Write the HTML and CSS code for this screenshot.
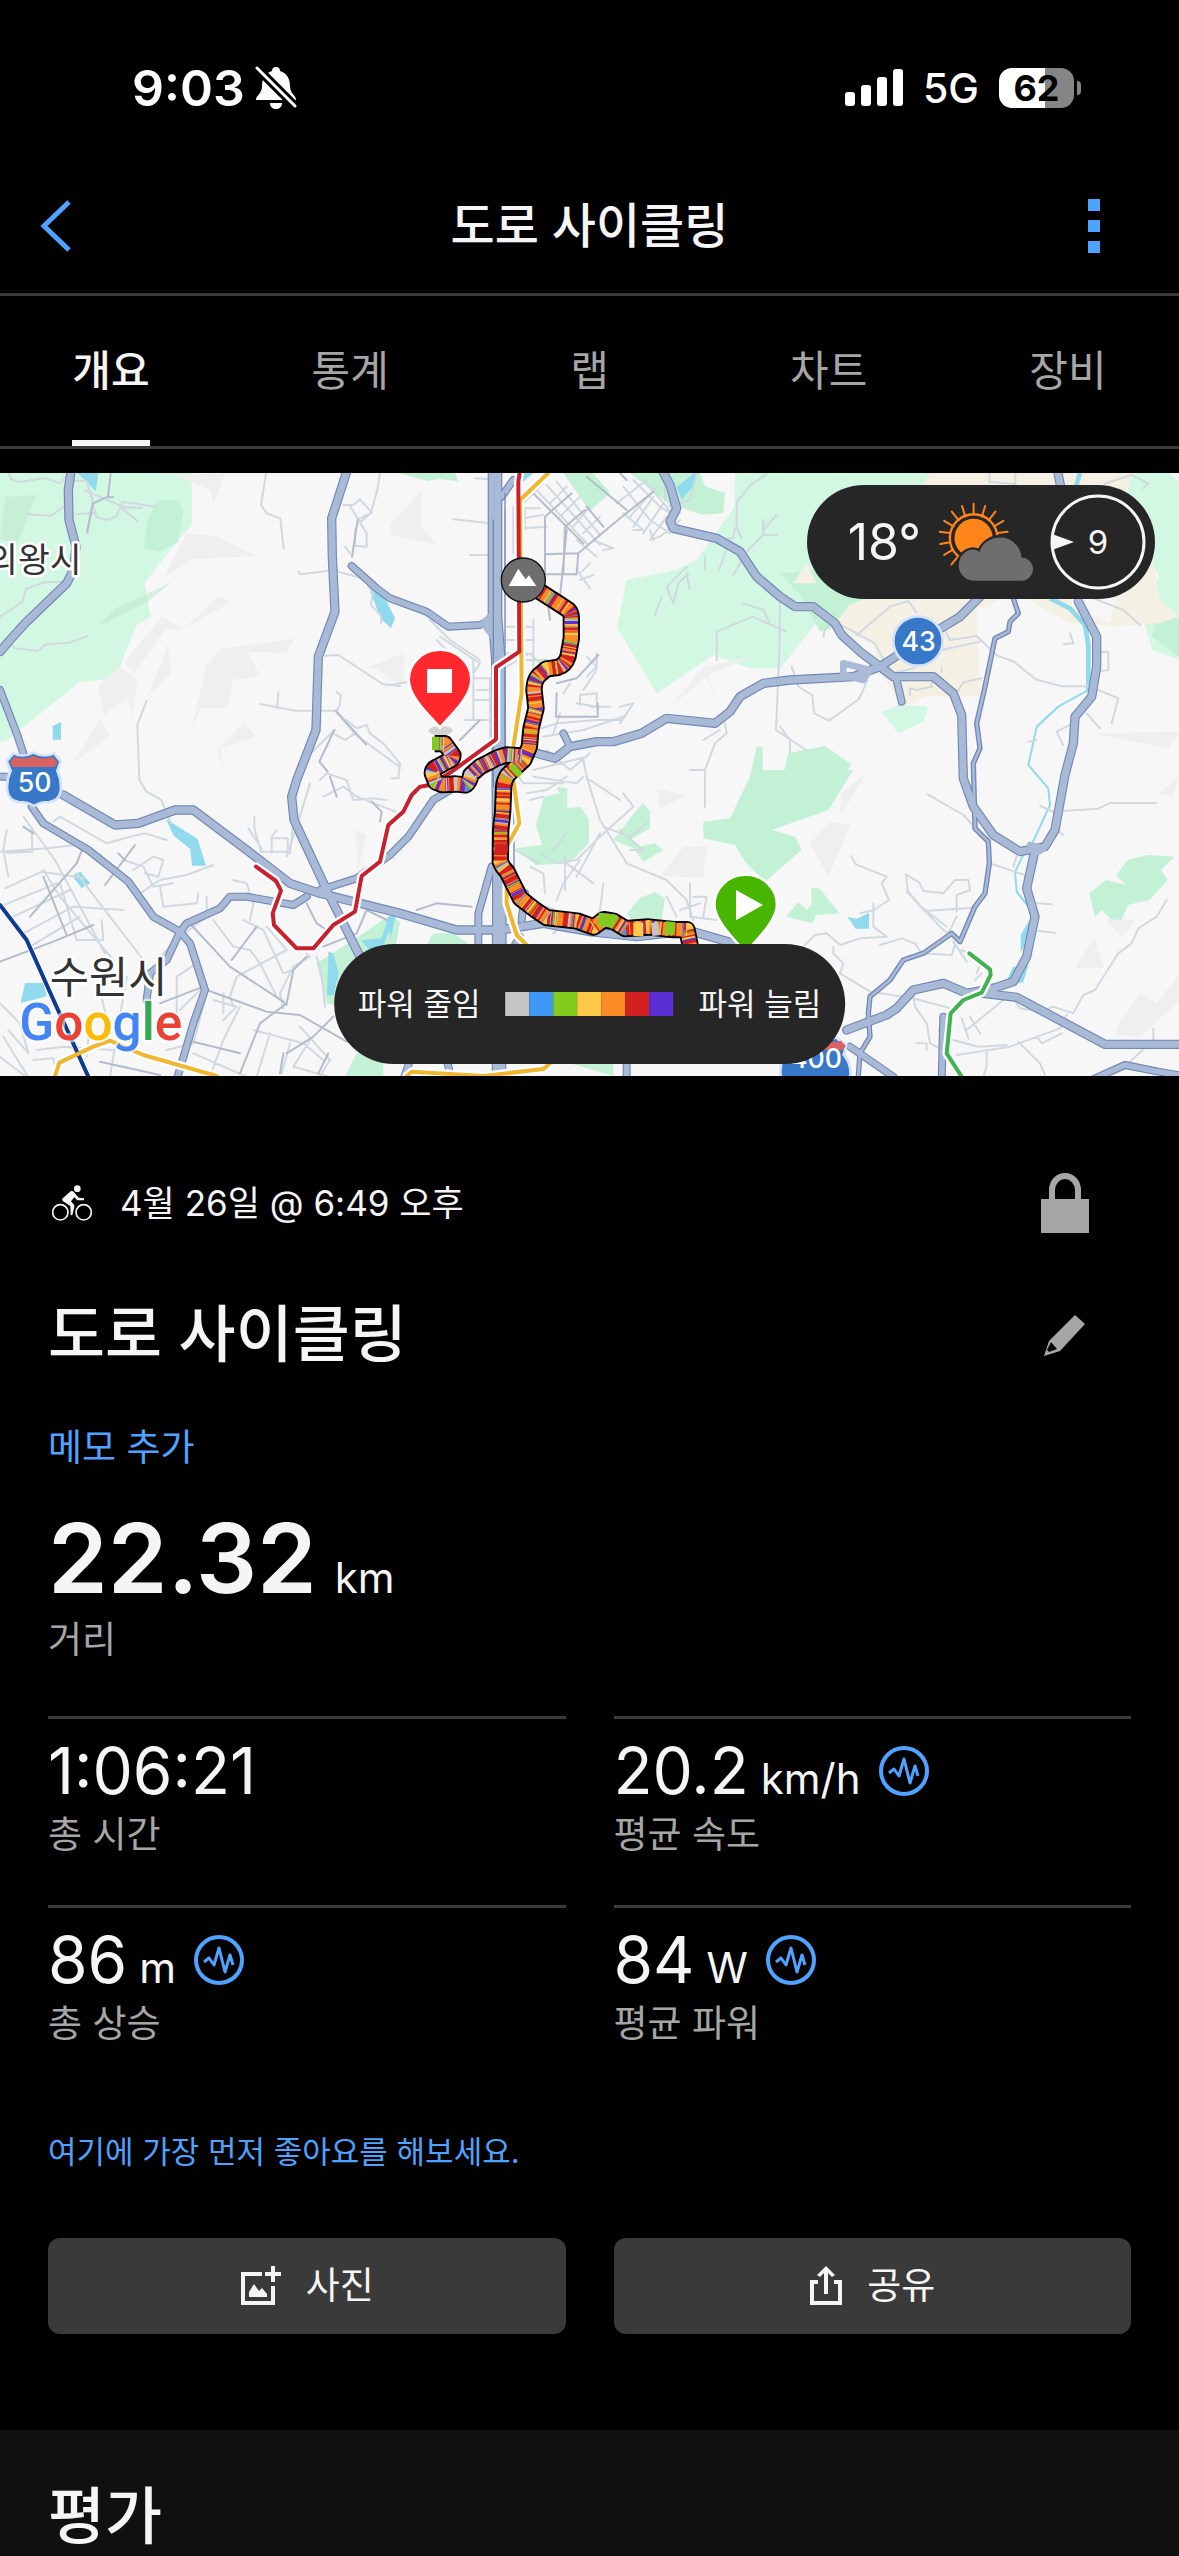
FILE: index.html
```html
<!DOCTYPE html>
<html lang="ko">

<head>
    <meta charset="UTF-8">
    <meta name="viewport" content="width=device-width, initial-scale=1.0">
    <title>도로 사이클링</title>
    <link rel="stylesheet" href="styles.css">
</head>

<body>
    <div class="status-bar">
        <div class="status-group">
            <span class="clock">9:03</span>
            <svg class="bell" viewBox="0 0 42 44" width="42" height="44">
                <path fill="#fff" d="M21 1c3 0 4 2 4 4 7 2 10 8 10 15 0 8 6 9 6 14H1c0-5 6-6 6-14C7 13 10 7 17 5c0-2 1-4 4-4zM15 37h12c0 4-3 6-6 6s-6-2-6-6z" />
                <path stroke="#000" stroke-width="9" d="M0 0L42 42" />
                <path stroke="#fff" stroke-width="3" stroke-linecap="round" d="M2 2L40 40" />
            </svg>
        </div>
        <div class="status-group status-right">
            <svg viewBox="0 0 58 38" width="58" height="38" fill="#fff">
                <rect x="0" y="23" width="10" height="14" rx="3" />
                <rect x="16" y="16" width="10" height="21" rx="3" />
                <rect x="32" y="8" width="10" height="29" rx="3" />
                <rect x="48" y="0" width="10" height="37" rx="3" />
            </svg>
            <span class="network">5G</span>
            <div class="battery"><span>62</span></div>
        </div>
    </div>

    <header class="nav">
        <button class="nav-button" aria-label="뒤로">
            <svg viewBox="0 0 32 52" width="32" height="52" fill="none" stroke="#4da3ff" stroke-width="5">
                <path d="M29 2L4 26l25 24" />
            </svg>
        </button>
        <h1>도로 사이클링</h1>
        <button class="nav-button nav-more" aria-label="더 보기">
            <svg viewBox="0 0 12 54" width="12" height="54" fill="#4da3ff">
                <path d="M0 0h12v12H0zM0 21h12v12H0zM0 42h12v12H0z" />
            </svg>
        </button>
    </header>

    <nav class="tabs">
        <button class="tab active">개요</button>
        <button class="tab">통계</button>
        <button class="tab">랩</button>
        <button class="tab">차트</button>
        <button class="tab">장비</button>
    </nav>

    <div class="map">
        <svg class="map-canvas" viewBox="0 39 3537 1809">
            <rect y="39" width="3537" height="1809" fill="#f7f7f7" />

            <!-- parks and hills -->
            <g fill="#d2f7e2">
                <path d="M0 39H575V195L530 245 433 370l20 100-43 25-65 160-105 10L15 845 0 845z" />
                <path d="M2205 39h590l15 36-200 340-150 60-120 150H2250l-110-40-170 115-118-195 27-145 150-30 60-30 115-160z" />
                <path d="M3390 39h120l27 30v530l-80-30-30-100 50-120-100-180zM2645 755l50-20 90 5-15 45-75 35z" />
            </g>
            <g fill="#c3f1d6">
                <path d="M470 120h65l15 35-15 90-60 30-43-10 10-80zM1690 39h90l50 60-60 55zM1890 39h210l15 40 60 20-5 60-60 5-100-30zM1195 39h170l10 25-60-8-30 7z" />
                <path d="M2340 340l120-10 145 95-5 50-140 40-60-110zM3480 455l57 15v120l-80-60zM2365 880l110-22 80 55-50 60-100 40-65-30zM2270 860h18v85l25 15-10 50-65-10z" />
                <path d="M1632 1010l45-10-5-20 30 5v60l40-5 25 40v70l-60 60-100 5-60-50 80-10-20-60zM1910 1050l20-20 20 25v50l-60 35 25 20 50-10 25 20-60 35-30-40-60-25z" />
                <path d="M2260 930h300l-75 120-170 60 70 20 20 40-110 95-60-60-30-50-95-20v-50l80-10zM1880 1360l40-45 45-20 30 20-10 65-80 10zM1300 1420l60 0 50 35H1280z" />
                <path d="M2358 1370l37-45 25 25 15-15-2-50h25l60 75-70 5-10 25zM3268 1300l50-40 60 15-30-30 35-45 60-15 80 5-40 40 20 30-55 60-65 15-18 45h-30l-30-30-20 20z" />
                <path d="M950 1510l110-70 110-75 30 20-10 60-110 210-100-25zM1070 1780h80v70H1035zM1710 1810h130v38z" />
            </g>
            <g fill="#f5f0e4">
                <path d="M2790 39h610l-30 70-160 330 140 60-140-10-160-90-120 50 10 260-155 0-80 30-60-100-30-90-120-45 55-70 80-30-10-80z" />
                <path d="M3350 400l60-180 40 20 30 180 57 50-60 20-150 10zM2380 370l40-60 30 60z" />
            </g>
            <g fill="#efefef">
                <path d="M520 45l155-5-35 95-10-45zM560 220l95 10 110 58-190 10-85 55zM555 505l100-98 35 20zM485 470l70 38-60 0-90 130-33-30zM665 565l217-28-25 43-115-6 38 75-80 10-20 85-75 0-30 60 45-190zM505 550l8 90-70 70zM360 620l55 40-20 115-10-60-75 50-15-90zM300 778l30 50-110 80zM730 790l40 40-110 35 10 60-18-55z" />
                <path d="M1268 90l-5 110 50 55-140-30-3-35zM1110 620l100-40v90zM1218 580l-20 90-28-10zM2255 590l-130 55 30 100-35-95-110 90 100-120zM1970 985l90 22-80 35zM2050 1160l70-2-10 95-130-5z" />
                <path d="M2598 940l-75 60 0 65zM2492 1085l58 10-65 155-55-100zM3280 820l260-5-35 50zM3315 1377l90 5-40 50zM3282 1432l30 90-85 2zM3350 1700l70-100 50 30 70-90v80l-120 110-75-5zM1065 1105l35 20-25 105zM3475 1000l62-50-20 60z" />
            </g>
            <path fill="#bfe9cf" opacity=".6" d="M15 110l95-5-60 150-50-20zM290 500l60-55 165-78-75 60z" />
            <g fill="#90daee">
                <path d="M233 39h62l-8 55zM1105 380l40 15 40 80-12 28-30-25zM158 798l25-12v53h-25zM1158 440l27 30-15 35zM2030 80l60-45-5 35-40 50zM1570 39h30l-32 28z" />
                <path d="M498 1077l95 60 25 80-42 0-5-50-50-40zM216 1247l25-12 30 35-26 14zM75 1569l55 0 10 40-78 20zM985 1475l15 5 16 60-15 65-20 2zM1085 1440l60-5 20-65 25-5-45 100-35 10zM2542 1371l30 5 35-18v48h-40zM1170 1370l15 10-15 60z" />
                <path d="M3040 1520l45-4-15 50-60 15zM3090 1376l-8 70-20 30 0-50z" />
            </g>
            <g fill="none" stroke="#90daee">
                <path stroke-width="14" d="M3240 39l-15 50M3150 415l60 30 45 50 10 60v140" />
                <path stroke-width="6" d="M3265 690l-90 50-65 60-25 115 60 70 5 50-60 130M3070 1185l-25 50 5 60 35 45M2980 1570l-85 45-50 40-30 60" />
            </g>

            <!-- minor streets -->
            <g fill="none" stroke="#d1d9e0" stroke-width="6" stroke-linejoin="round" stroke-linecap="round">
                <path d="M25 40l10 18 25 8 75-12 45 16 20-20M85 163l68 4 40-28M225 62h35l18 60-15 100M280 130l8 40 32 10 28-10 20-45 100 15M360 140l52 43M228 163l60-5M0 470l65-42 15-42 55-20h55M30 550l15 15 68 8 25-20 70-5 55-20M440 722l-28 72 6 165 20 35 45 25 30 70M798 40l-15 95 18 25 40 15 10 90M895 335l8 8 95-12 95 25 25 45-5 35 30 30v25M975 587l40-2 135 88 50 5M780 732l108 20h115M835 697l-4 50M1010 695l12 10-2 30-12 20 60 70 130 95M1003 810l-100 100M1040 780l30 25 30-10 10 25 40 30 50 60-5 45h-20M1000 820l35 20 30-20M1030 135h30l20-17 35 40-40 20-25-40M1140 40l-8 50-20 70-30 25M1075 180l25 40v40l-35-3V210M1035 260l15 20" />
                <path d="M255 92l120 50 50 2M160 1085l20-15 140 80 70-20 45-10 65 20M70 1070l95 130 150 280M0 1175l140-10 90-10M20 1110l-10 60 15 80M95 1110l2 65-75 3M15 1285l110-50 130 20M0 1340l170-70M40 1370l170-80M70 1420l150-80 150 10M90 1460l150-90M130 1230l50 80 160 190M180 1270l50 170h80l-5-60M230 1240l200 260M370 1200l60 20 30 60 60-10M400 1230l60-40 30 10-15 50-40-10M420 1300l60-40 80-15 80-30M480 1280l10 60 100-10M590 1330l5-30M620 1310v60l-80 60-60 60M640 1380l60 80 50 10 30 40 50 100M700 1260l40 10 20 60-10 50M730 1380l60 30 60 130 30-10M800 1400l60 70-150 80-20 60 10 30" />
                <path d="M763 1070v35l20 70h80l0-40-50 0M815 1180v-50l15-20M745 1105l40 60M870 1180l10-90M930 970l-40 130-30 90M960 960l20-20 60 20 20 60 60-5 40 5M970 1010l60-30 40 30 130 50M820 1380l50 50 60 60-50 30-40 80 10 45M950 1490l15 60 10 90" />
                <path d="M0 1630l60 60 25 90-60-70M0 1790l90 70-80-130M100 1800l60-5 10 50M110 1770l80-10 150 10M270 1680l-10 110M300 1590l30 130M380 1550l-50 300M530 1660v-110l60-40M530 1680l0-130M600 1590l-60 60M640 1620l70 20-40 40M670 1600l0 60M580 1780l250 110M620 1600l-40 150-80 20M720 1640l-50 100-40 110M760 1710l150 40 60 50M810 1720l-40 130M870 1750l-25 90M900 1700l90 100-30 48M930 1740l-50 80 100 28" />
                <path d="M1360 178l100 10M1410 285h60M1425 55l50 3M1290 480l60 60 90 60M1320 530l120 80-20 30M1310 540l60 60M1170 675l60-10 60-55M1395 655h80M1420 600v180M1470 660v180M1395 780h80M1420 720h50M1430 690h50" />
                <path d="M1540 140v140M1560 145h60M1570 175l60-10M1570 205l70-5M1575 150v60M1515 150v180M1550 310v60M1570 130l60-60M1610 90l150 160M1640 75l160 180M1670 65l40 50 90 110M1650 130l50-50M1680 170l60-60M1720 200l50-60M1750 220l50-50M1730 240l60 50M1780 240l60 25-30 5" />
                <path d="M1870 80l80 100 60 40M1900 60l80 80 50 30M1930 60l70 80 30 50M1870 160l60 50-30 0M1960 110l-60 90M1990 130l-60 90M2000 170l-50 70M1850 130l90-70M1890 170l80-90M1960 240l-10-30M2040 180l-60 50-30 10M1995 120v-40h15v60l60-20 20-80M2010 140l30 20" />
                <path d="M1570 480v150M1600 480v150M1520 500h80M1520 540h80M1570 600h70M1520 580h60M1740 340l30-30M1730 330l40 55M1740 360l40-15M1520 620l70-40 50 50M1690 700l20-30M1760 590l30 30-30 30M1790 580v50l-40 60" />
                <path d="M1610 810l60-20 120-10h70M1630 830l120-20 120-40M1640 870l70 60 60-50M1680 760l-20 60M1860 740l40-10-40 60M1730 730l60 10v-40l-50 5v30M1830 740h-60M1600 930l160-40M1530 910l40 60h120M1600 950l130 20 20-20M1580 1000l60-10 60-40M1590 1020l40-10" />
                <path d="M1750 900l10 50 40 130 80 130 120 50 60 60 20 60M1770 960l90 60M1620 1180l50 30 60-10 70-70 100-90-30-40M1545 1170l70 40M1700 1210l80 60M1740 1200l-50 70-20 50M1695 1190l0 100M1800 1120l-70 130M1700 1120l-40 50M1810 1270l-10 80-20 30M1590 1220l40 20 5 60M1810 1100l80 30 50-40M1860 1110l70 60h-40" />
                <path d="M2070 1270v100l80 10M2040 1350l60-20M2080 1310l40 0-10 60M2000 1310l30 60M1640 1340l50 20-10 40M1660 1420l80-60M2110 840l50-30M2110 930h5v110M2070 930h45l30-80 35-30-5-30M2340 400l-2 180-10 230 90 60M2150 600v-80M2060 320l-60 60 20 50 15-60 30-30M1985 410l-20 55M2115 290v40M2060 340l8 45" />
                <path d="M2300 42l-50 35-40 50v75l15 32M2205 205l-5 30-15 0v20l-28 75M2330 225l-40 0-50 50-40 70M2330 165l-40 45M2290 180v40M2230 430l60 20 20 40M2148 515l110-45 100 45" />
            </g>
            <g transform="translate(2340 0)" fill="none" stroke="#d1d9e0" stroke-width="6" stroke-linejoin="round" stroke-linecap="round">
                <path d="M628 40v25l78 7V40M975 70l80-25 50 25-15 15M230 525l100-85 55-17 25 35M130 530l5-25 30-20 120 65 20 40 35 50 60-15 60-50 140-30M490 500l20 40 80-12 60 58 50 18 70 55 75 20h80M605 655l-55 12-20 32M455 665v15l-45 10-20-5v20M0 800l30 40v40M35 620l20 60 42 25 5 55 45 22 90-65 25-55M940 415l90 35 50 45M870 520l10 30-30 3M485 625v10M955 575h30v55l-35 5M955 690l60 25-20 75M920 760l40 45M830 815l60-30M830 815l20 40M745 845l25-5" />
                <path transform="translate(0 930)" d="M443 73l108 62 60 70M845 123l110-7 35-17h138M780 107l50 25M830 180l20 15M213 258l15 25 92 37-15 20 22 50-45 30-40 10M378 313l40 25 12 25 60 7 35-40h40l5 30-40 15v50M378 313l5 50 50 60 80-5 70-5M380 365l110 115 50 30M430 415l70 55M75 525l30-30 35-5 40 35 60-20 80-5-40-30v-70M300 525l65-20 40 15 20 30 90 5 10-30M160 530v20l30 30-10 30 90 55 130 20 110 30M630 280l110 37M700 290l10-30M770 400l45 3M775 483l50 5M700 685l20 30 60 10 40-15 60 20 30-55 35-15 70-110 40-30 20-45 55-35 30-50M860 735l-20 40-150 55-160 25M520 810l75 20 85-5M560 780l110-90M545 745l20 60M570 740l30 50M400 680l5 30 35 50 10 60 40 20M410 820h30v20M715 815l65 65 15 35M620 840v50l-10 30M1120 775v35l-75 70M770 800l15 20 60-30M590 610l15-40-60-30M585 630l20-20M530 440l-30 60M560 575l-40-60" />
            </g>
            <g fill="none" stroke="#b4bccb" stroke-width="6" stroke-linejoin="round" stroke-linecap="round">
                <path d="M332 42l-8 68-45 20-18 85M325 112h15M1073 180l-17 110M1008 753l90 100M1003 810l-45 95 25 30" />
                <path d="M100 1120l-30-20M250 1160l-20 50-140 160M405 1155l-90 120M355 1180l20 20M130 1250l70 175M0 1505l160-60 120-50M560 1380l130 140 160 105 10 10M770 1400l-75 100M920 1490l-40 40-20 100-80 60-60 150M620 1590l180 65 100 10 140 80M480 1630l130-50M580 1745l140 35M300 1805l180 40M985 1780l-30 60M860 1780l80-50 60-60M840 1840l10-60M920 1330l30 60 30 20M970 1460l100-40 30-70 60 30M990 950l20 60M1115 1025l30 30-5 30" />
                <path d="M1635 290v-120l80-70M1635 283l100-3 125-105 100-80M1735 280l-5 60M1635 283v60h95M1690 340l5-140 60-50M1600 100l150 150M1760 140l50 60M1760 50l120 100M1860 40l20 20M1640 400l10 80M1670 670l60-15 65-70M1670 700l-2 70h125v-40M1700 210l-20 200M1380 840l60-60M1250 1350l60-20 105 10" />
            </g>

            <!-- highways: dark casing first, then the lighter fill -->
            <defs>
                <g id="roads-wide">
                    <path d="M215 20l-10 70 2 90 21 80-8 70-20 40L75 490 30 540 0 575" />
                    <path d="M190 1005l155 90 70-5 110-40h55l160 120 130 100 90 30 240 60 170 50h130l130-20 140 25 140 15 160-18 130 38" />
                    <path d="M1045 20L995 175l2 115 8 165-50 135-7 220-58 150-15 50 7 70 98 210 100 200" />
                    <path d="M3225 20M3170 20l20 100M3235 425l55 105 0 90-15 90-50 60-5 80-25 95-30 165-30 50-75 15-80-50-60-85-30-85-5-190-25-65-60-50H2680l-100-75-55-50-20-35-65-50h-55l-45-30-70-60-50-75-70-40-130-30-10-20 20-40-20-70-40-75-40-15-80-71-20-20" />
                    <path d="M1610 880l55 15 45-35 80-15h50l85-25 75-45 145 15 45-35 30-45 70-40 80-10 190-10 80-30 140-90 100-60 60-60" />
                    <path d="M3105 1170l-25 115 25 85-25 120-40 75-60 20-80 15-70-30-90 20-50 55-30 20-120 45M2950 1600l100 12 265 141h230" />
                </g>
                <g id="roads-mid">
                    <path d="M0 690l50 130 20 60M0 950h60M95 1040l35 50 135 80 120 95 75 105 80 45 30 35 45 140-35 100-50 170" />
                    <path d="M540 1415l-40 85-50 40-10 80M540 1415l20-25 100-45 30-35h50l140 25 40-25M960 1290l110-35 100-70 55-55 75-110 50-30" />
                    <path d="M1055 318l75 67 40 30 110 40 65 45 95-5 40-20M1540 60l-35 50M1475 1220l-40 140v90M2690 660l15 65M1690 820l20 40" />
                    <path d="M2830 1670l-5 190M2550 1760l130 90M3285 1855l90-40 100 20 70 12M1230 1800l-20 60M1340 1800l15 60M1880 1800l0 60M1575 1300l-10 80M1560 1430l-30 50" />
                </g>
                <g id="roads-thin">
                    <path d="M3040 415l15 45-25 25-5 30-40 20-30 145-25 110 10 75-20 45 5 195 40 40 3 65-13 90-30 40-45 105-25-25-85 60-60 20-40 60-60 50-5 50 5 70-30 50-5 68" />
                </g>
                <path id="expressway" d="M1485 20v450l10 130 3 700-1 560" />
            </defs>
            <g class="casing">
                <use href="#roads-wide" stroke-width="28" />
                <use href="#roads-mid" stroke-width="24" />
                <use href="#roads-thin" stroke-width="16" />
                <use href="#expressway" stroke-width="44" />
            </g>
            <g class="fill">
                <use href="#roads-wide" stroke-width="21" />
                <use href="#roads-mid" stroke-width="17" />
                <use href="#roads-thin" stroke-width="8" />
                <use href="#expressway" stroke-width="37" />
                <path stroke-width="20" d="M2530 610l80 20-20 30-60-15zM3090 1155l40 10-15 10M1450 490l20-20 10 60z" />
            </g>
            <path class="casing" stroke-width="4" d="M1480 180v800M1515 100v1000M1542 800v460" />

            <!-- rail lines -->
            <defs>
                <path id="rail-yellow" d="M1645 39l-85 81 5 580-25 160 0 100 18 130-38 70v170l30 95 30 30M1220 1848l15-13 215 13 180-21 20-17M165 1848l13-40 102-48 50-18 100 43 220 63" />
                <path id="rail-red" d="M1560 30L1555 65 1558 575 1488 622V838L1355 935 1290 975 1260 980 1235 1005 1210 1055 1165 1095 1140 1205 1085 1248 1065 1355 1000 1395 940 1465H890L822 1395 818 1360 843 1292 828 1263 768 1220" />
                <path id="rail-green" d="M2908 1480l62 48 2 17-27 53-55 22-38 40-12 120 45 70" />
                <path id="rail-navy" d="M0 1335l80 105 85 190 100 220" />
            </defs>
            <g fill="none" stroke-linejoin="round" stroke-linecap="round">
                <g stroke="#fff" stroke-width="26">
                    <use href="#rail-yellow" />
                    <use href="#rail-red" />
                    <use href="#rail-green" />
                    <use href="#rail-navy" stroke-width="16" />
                </g>
                <g stroke-width="12">
                    <use href="#rail-navy" stroke="#0d3b92" />
                    <use href="#rail-yellow" stroke="#f0b62f" />
                    <use href="#rail-red" stroke="#c9202f" />
                    <use href="#rail-green" stroke="#3fb34f" />
                </g>
            </g>

            <!-- place names and road shields -->
            <g class="place">
                <text x="245" y="336" font-size="104" text-anchor="end">의왕시</text>
                <text x="326" y="1600" font-size="128" text-anchor="middle">수원시</text>
            </g>
            <g id="shield-50">
                <path class="shield" d="M40 880q30 14 60-2 32 16 62 2l20 24-10 28q14 30 10 62-5 28-34 32-30 0-46 12-16-12-46-12-29-4-34-32-4-32 10-62l-12-28z" />
                <path fill="#d96262" d="M44 890q28 10 57-2 29 12 57 2l14 16-8 15H38l-8-15z" />
                <text class="shield-text" x="104" y="997">50</text>
            </g>
            <g transform="translate(2345 852)">
                <path class="shield" d="M40 880q30 14 60-2 32 16 62 2l32 24-8 28q24 30 20 62-5 28-34 32H40Q0 1020-3 994q-4-32 10-62l-2-28z" />
                <path fill="#d96262" d="M44 890q28 10 57-2 29 12 77 2l14 16-8 12H28l-8-15z" />
                <text class="shield-text" x="103" y="972">400</text>
            </g>
            <circle class="shield" cx="2754" cy="543" r="74" />
            <text class="shield-text" x="2756" y="573">43</text>

            <text class="google" x="58" y="1741"><tspan fill="#4285f4">G</tspan><tspan fill="#ea4335">o</tspan><tspan fill="#fbbc05">o</tspan><tspan fill="#4285f4">g</tspan><tspan fill="#34a853">l</tspan><tspan fill="#ea4335">e</tspan></text>

            <!-- recorded track, coloured by power -->
            <defs>
                <path id="track" d="M1620 395l55 35 30 20q10 10 9 30v55l-10 55q-8 25-30 32l-35 5-25 22q-12 15-12 41l6 55-15 60-5 55-17 40-48 45q-10 15-12 35l-3 75-6 55-1 95q5 15 20 30l20 40 20 40 45 35 35 23 90 10 50 18 30-22 30 5 35 22 70-5 75 8 40 0 10 50" />
                <path id="track-spur" d="M1565 888l-45-3q-25 5-50 20l-30 15-28 25q-2 20-15 30l-30-3-40 2-20-8-10-26q0-15 20-22l30-16q12-5 12-16l-25-35-30 0" />
            </defs>
            <g class="track">
                <g stroke="#000" stroke-width="52">
                    <use href="#track" />
                    <use href="#track-spur" />
                </g>
                <g stroke-width="40">
                    <g stroke="#d32020">
                        <use href="#track" />
                        <use href="#track-spur" />
                    </g>
                    <g stroke="#fa8b25" stroke-dasharray="7 5 16 9 4 12 23 18 9 7 3 14">
                        <use href="#track" />
                        <use href="#track-spur" />
                    </g>
                    <g stroke="#fcc949" stroke-dasharray="4 21 9 34 3 17 6 52">
                        <use href="#track" />
                        <use href="#track-spur" />
                    </g>
                    <g stroke="#5b2fd6" stroke-dasharray="3 38 5 61 4 25 9 83">
                        <use href="#track" />
                        <use href="#track-spur" stroke-dasharray="8 12 4 23 6 17" />
                    </g>
                    <g stroke="#3f97f6" stroke-dasharray="2 47 3 89 2 31" stroke-dashoffset="20">
                        <use href="#track" />
                        <use href="#track-spur" />
                    </g>
                    <g stroke="#c4c4c4" stroke-dasharray="3 74 2 51 6 140">
                        <use href="#track" />
                        <use href="#track-spur" stroke-dasharray="4 30 9 22" />
                    </g>
                    <g stroke="#82ca1e" stroke-dasharray="2 66 4 93" stroke-dashoffset="35">
                        <use href="#track" />
                        <use href="#track-spur" />
                    </g>
                    <path stroke="#82ca1e" d="M1555 925l-15 14M1795 1378l40 4 12 8M1995 1404l30 2M1318 850l-22 0" />
                    <path stroke="#c4c4c4" d="M1955 1408l22-2" />
                    <path stroke="#fcc949" d="M1900 1408l30 0" />
                    <path stroke="#d32020" d="M1503 1150v30" />
                </g>
            </g>

            <circle cx="1570" cy="360" r="66" fill="#6e6e6e" stroke="#111" stroke-width="4" />
            <path fill="#fff" d="M1526 378l29-52 22 32 10-12 22 32z" />
            <ellipse cx="1322" cy="812" rx="36" ry="14" fill="#000" opacity=".15" />
            <path fill="#ff282c" stroke="#fff" stroke-width="8" d="M1320 803c-20-26-94-88-94-144a94 90 0 0 1 188 0c0 56-74 118-94 144z" />
            <path fill="#fff" d="M1281 627h75v72h-75z" />
            <path fill="#48b500" stroke="#fff" stroke-width="8" d="M2237 1478c-20-26-94-92-94-144a94 90 0 0 1 188 0c0 52-74 118-94 144z" />
            <path fill="#fff" d="M2208 1290l81 45-81 46z" />
        </svg>

        <div class="weather">
            <span class="temperature">18°</span>
            <svg class="weather-icon" viewBox="480 125 286 242" width="95" height="80">
                <g stroke="#ff851b" stroke-width="6">
                    <path d="M584 130v32M549 137l10 32M619 137l-10 32M518 154l20 26M650 154l-20 26M495 182l28 17M674 182l-28 17M481 215l31 4M687 215l-31 4M483 252l30-5M495 285l26-16M517 314l22-27" stroke-linecap="round" />
                    <circle cx="584" cy="234" r="72" fill="none" stroke-width="7" />
                </g>
                <circle cx="584" cy="234" r="58" fill="#ff851b" />
                <path fill="#6e6e6e" stroke="#262626" stroke-width="14" paint-order="stroke" d="M585 363a45 47 0 0 1-2-94q10 0 18 7a66 66 0 0 1 128 17 35 35 0 0 1-1 70z" />
            </svg>
            <div class="wind">
                <svg viewBox="0 0 96 96" width="96" height="96">
                    <circle cx="48" cy="48" r="46" fill="none" stroke="#f5f5f5" stroke-width="3" />
                    <path fill="#f5f5f5" d="M2 40l22 8-22 8z" />
                </svg>
                <span>9</span>
            </div>
        </div>

        <div class="legend">
            <span>파워 줄임</span>
            <div class="legend-scale">
                <i class="zone-0"></i><i class="zone-1"></i><i class="zone-2"></i><i class="zone-3"></i><i class="zone-4"></i><i class="zone-5"></i><i class="zone-6"></i>
            </div>
            <span>파워 늘림</span>
        </div>
    </div>

    <main class="summary">
        <div class="meta">
            <svg viewBox="54 68 144 114" width="48" height="38" fill="#f5f5f5">
                <g fill="none" stroke="#f5f5f5" stroke-width="5">
                    <circle cx="91" cy="153" r="23" />
                    <circle cx="161" cy="153" r="23" />
                </g>
                <circle cx="142" cy="82" r="10" />
                <path d="M122 90q5-2 9 1l15 18 16 2v6h-20l-9-9-10 12 9 10q2 3 1 7l-6 25h-5l-1-28-22-14q-5-4-1-9z" />
            </svg>
            <span class="date">4월 26일 @ 6:49 오후</span>
            <svg class="lock" viewBox="0 0 48 60" width="48" height="60">
                <path fill="#a6a6a6" d="M0 26h48v34H0z" />
                <path fill="none" stroke="#a6a6a6" stroke-width="6" d="M11 27V17a13 14 0 0 1 26 0v10" />
            </svg>
        </div>
        <div class="title-row">
            <h2>도로 사이클링</h2>
            <button class="edit" aria-label="제목 편집">
                <svg viewBox="0 0 42 42" width="42" height="42">
                    <path fill="#a6a6a6" d="M31 1l10 9-25 27L0 42 5 27z" />
                    <path fill="#000" d="M7 28l6 7-8 3-2-2z" />
                </svg>
            </button>
        </div>
        <a class="note-link" href="#">메모 추가</a>

        <div class="distance">22.32 <small>km</small></div>
        <div class="label">거리</div>

        <div class="stats">
            <div class="stat">
                <div class="value">1:06:21</div>
                <div class="label">총 시간</div>
            </div>
            <div class="stat">
                <div class="value">20.2 <small>km/h</small>
                    <svg class="pulse" viewBox="0 0 50 50" width="50" height="50"><use href="#pulse" /></svg>
                </div>
                <div class="label">평균 속도</div>
            </div>
            <div class="stat">
                <div class="value">86 <small>m</small>
                    <svg class="pulse" viewBox="0 0 50 50" width="50" height="50"><use href="#pulse" /></svg>
                </div>
                <div class="label">총 상승</div>
            </div>
            <div class="stat">
                <div class="value">84 <small>W</small>
                    <svg class="pulse" viewBox="0 0 50 50" width="50" height="50"><use href="#pulse" /></svg>
                </div>
                <div class="label">평균 파워</div>
            </div>
        </div>

        <a class="like-link" href="#">여기에 가장 먼저 좋아요를 해보세요.</a>

        <div class="actions">
            <button class="action">
                <svg viewBox="0 0 42 42" width="42" height="42" fill="#f5f5f5">
                    <path d="M1 7h21v4H5v25h26V21h4v19H1zM31 1h4v6h6v4h-6v6h-4v-6h-6V7h6zM9 32V27l5-8 5 7 3-3 5 6v3z" />
                </svg>
                사진
            </button>
            <button class="action">
                <svg viewBox="0 0 34 42" width="34" height="42" fill="#f5f5f5">
                    <path d="M1 15h8v4H5v17h24V19h-4v-4h8v25H1zM17 1l9 9-3 2-4-4v21h-4V8l-4 4-3-2z" />
                </svg>
                공유
            </button>
        </div>
    </main>

    <section class="rating">
        <h2>평가</h2>
    </section>

    <svg width="0" height="0" class="symbols">
        <symbol id="pulse" viewBox="0 0 50 50">
            <g fill="none" stroke="#4da3ff">
                <circle cx="25" cy="25" r="23" stroke-width="4" />
                <path stroke-width="3" stroke-linejoin="round" d="M10 27l5-4 5 7 5-17 6 24 5-17 3 10" />
            </g>
        </symbol>
    </svg>
</body>

</html>
```

FILE: styles.css
```css
* {
    box-sizing: border-box;
}

body {
    margin: 0;
    min-height: 100vh;
    display: flex;
    flex-direction: column;
    background: #000;
    color: #f5f5f5;
    font-family: Inter, "Noto Sans CJK KR", sans-serif;
    font-size: 37px;
    line-height: 48px;
}

h1, h2 {
    margin: 0;
    font-weight: 500;
}

button {
    padding: 0;
    border: 0;
    background: none;
    color: inherit;
    font: inherit;
    cursor: pointer;
}

a {
    color: #4da3ff;
    text-decoration: none;
}

svg {
    display: block;
    flex: none;
}

small {
    font-size: 42px;
    font-weight: 400;
    line-height: 48px;
}

.symbols {
    position: absolute;
}

/* status bar */
.status-bar {
    display: flex;
    justify-content: space-between;
    align-items: center;
    padding: 64px 97px 47px 132px;
    color: #fff;
}

.status-group {
    display: flex;
    align-items: center;
    gap: 10px;
}

.status-right {
    gap: 20px;
}

.clock {
    font-size: 50px;
    font-weight: 600;
}

.network {
    font-size: 41px;
    font-weight: 500;
}

.battery {
    position: relative;
    width: 75px;
    height: 40px;
    margin-right: 8px;
    border-radius: 13px;
    background: linear-gradient(90deg, #fff 62%, #858585 62%);
    color: #000;
    font-size: 36px;
    font-weight: 700;
    line-height: 40px;
    text-align: center;
}

.battery::after {
    content: "";
    position: absolute;
    top: 13px;
    right: -7px;
    width: 4px;
    height: 14px;
    border-radius: 0 4px 4px 0;
    background: #858585;
}

/* navigation */
.nav {
    display: flex;
    justify-content: space-between;
    align-items: center;
    height: 137px;
    padding: 0 40px;
    border-bottom: 3px solid #3a3a3a;
}

.nav h1 {
    font-size: 48px;
}

.nav-button {
    display: flex;
    width: 90px;
}

.nav-more {
    justify-content: center;
}

.tabs {
    display: flex;
    justify-content: space-between;
    padding: 0 72px;
    border-bottom: 3px solid #3a3a3a;
}

.tab {
    min-width: 78px;
    height: 150px;
    border-top: 6px solid transparent;
    border-bottom: 6px solid transparent;
    color: #a6a6a6;
    font-size: 42px;
    white-space: nowrap;
}

.tab.active {
    border-bottom-color: #f5f5f5;
    color: #f5f5f5;
    font-weight: 500;
}

/* map */
.map {
    position: relative;
    margin-top: 24px;
}

.map-canvas {
    width: 100%;
    height: auto;
}

.casing, .fill, .track {
    fill: none;
    stroke-linejoin: round;
    stroke-linecap: round;
}

.casing {
    stroke: #7388b5;
}

.fill {
    stroke: #a9bad7;
}

.track {
    stroke-linecap: butt;
}

.place {
    fill: #333;
    stroke: #fff;
    stroke-width: 16px;
    stroke-linejoin: round;
    paint-order: stroke;
    font-family: "Noto Sans CJK KR", sans-serif;
}

.shield {
    fill: #3878c8;
    stroke: #d5e2fb;
    stroke-width: 8px;
}

.shield-text {
    fill: #fff;
    font-size: 80px;
    font-weight: 500;
    text-anchor: middle;
}

.google {
    stroke: #fff;
    stroke-width: 14px;
    stroke-linejoin: round;
    stroke-opacity: 0.6;
    paint-order: stroke;
    font-family: Roboto, sans-serif;
    font-size: 154px;
    font-weight: 500;
}

.weather, .legend {
    position: absolute;
    display: flex;
    align-items: center;
    background: #262626;
}

.weather {
    top: 12px;
    right: 24px;
    height: 114px;
    padding: 0 9px 0 41px;
    border-radius: 57px;
}

.temperature {
    font-size: 50px;
}

.weather-icon {
    margin: 0 16px 0 18px;
}

.wind {
    position: relative;
}

.wind span {
    position: absolute;
    inset: 0;
    font-size: 33px;
    line-height: 96px;
    text-align: center;
}

.legend {
    bottom: 12px;
    left: 50%;
    gap: 25px;
    height: 120px;
    padding: 0 24px;
    border-radius: 60px;
    font-size: 31px;
    white-space: nowrap;
    transform: translateX(-50%);
}

.legend-scale {
    display: flex;
}

.legend-scale i {
    width: 24px;
    height: 24px;
}

.zone-0 { background: #c4c4c4; }
.zone-1 { background: #3f97f6; }
.zone-2 { background: #82ca1e; }
.zone-3 { background: #fcc949; }
.zone-4 { background: #fa8b25; }
.zone-5 { background: #d32020; }
.zone-6 { background: #5b2fd6; }

/* summary */
.summary {
    display: flex;
    flex-direction: column;
    align-items: stretch;
    padding: 94px 48px 96px;
}

.meta, .title-row {
    display: flex;
    align-items: center;
    padding-right: 42px;
}

.meta {
    height: 66px;
    gap: 24px;
}

.date {
    font-size: 35px;
}

.lock {
    margin-left: auto;
}

.title-row {
    justify-content: space-between;
    height: 84px;
    margin: 57px 0 47px;
}

.title-row h2, .rating h2 {
    font-size: 62px;
    line-height: 72px;
}

.edit {
    margin-right: 3px;
}

.note-link, .like-link {
    align-self: flex-start;
}

.distance {
    display: flex;
    align-items: baseline;
    gap: 18px;
    height: 100px;
    margin-top: 36px;
    font-size: 96px;
    font-weight: 600;
    line-height: 100px;
}

.label {
    margin-top: 8px;
    color: #a6a6a6;
}

.stats {
    display: grid;
    grid-template-columns: 1fr 1fr;
    column-gap: 48px;
    margin-top: 52px;
}

.stat {
    height: 189px;
    padding-top: 20px;
    border-top: 3px solid #3a3a3a;
}

.value {
    display: flex;
    align-items: baseline;
    gap: 12px;
    height: 64px;
    font-size: 64px;
    line-height: 64px;
}

.pulse {
    align-self: center;
    margin-left: 6px;
}

.like-link {
    margin-top: 34px;
    font-size: 31px;
}

.actions {
    display: grid;
    grid-template-columns: 1fr 1fr;
    gap: 48px;
    margin-top: 62px;
}

.action {
    display: flex;
    justify-content: center;
    align-items: center;
    gap: 24px;
    height: 96px;
    border-radius: 12px;
    background: #3a3a3a;
}

.rating {
    flex: 1;
    padding: 51px 48px 0;
    background: #101010;
}
```
